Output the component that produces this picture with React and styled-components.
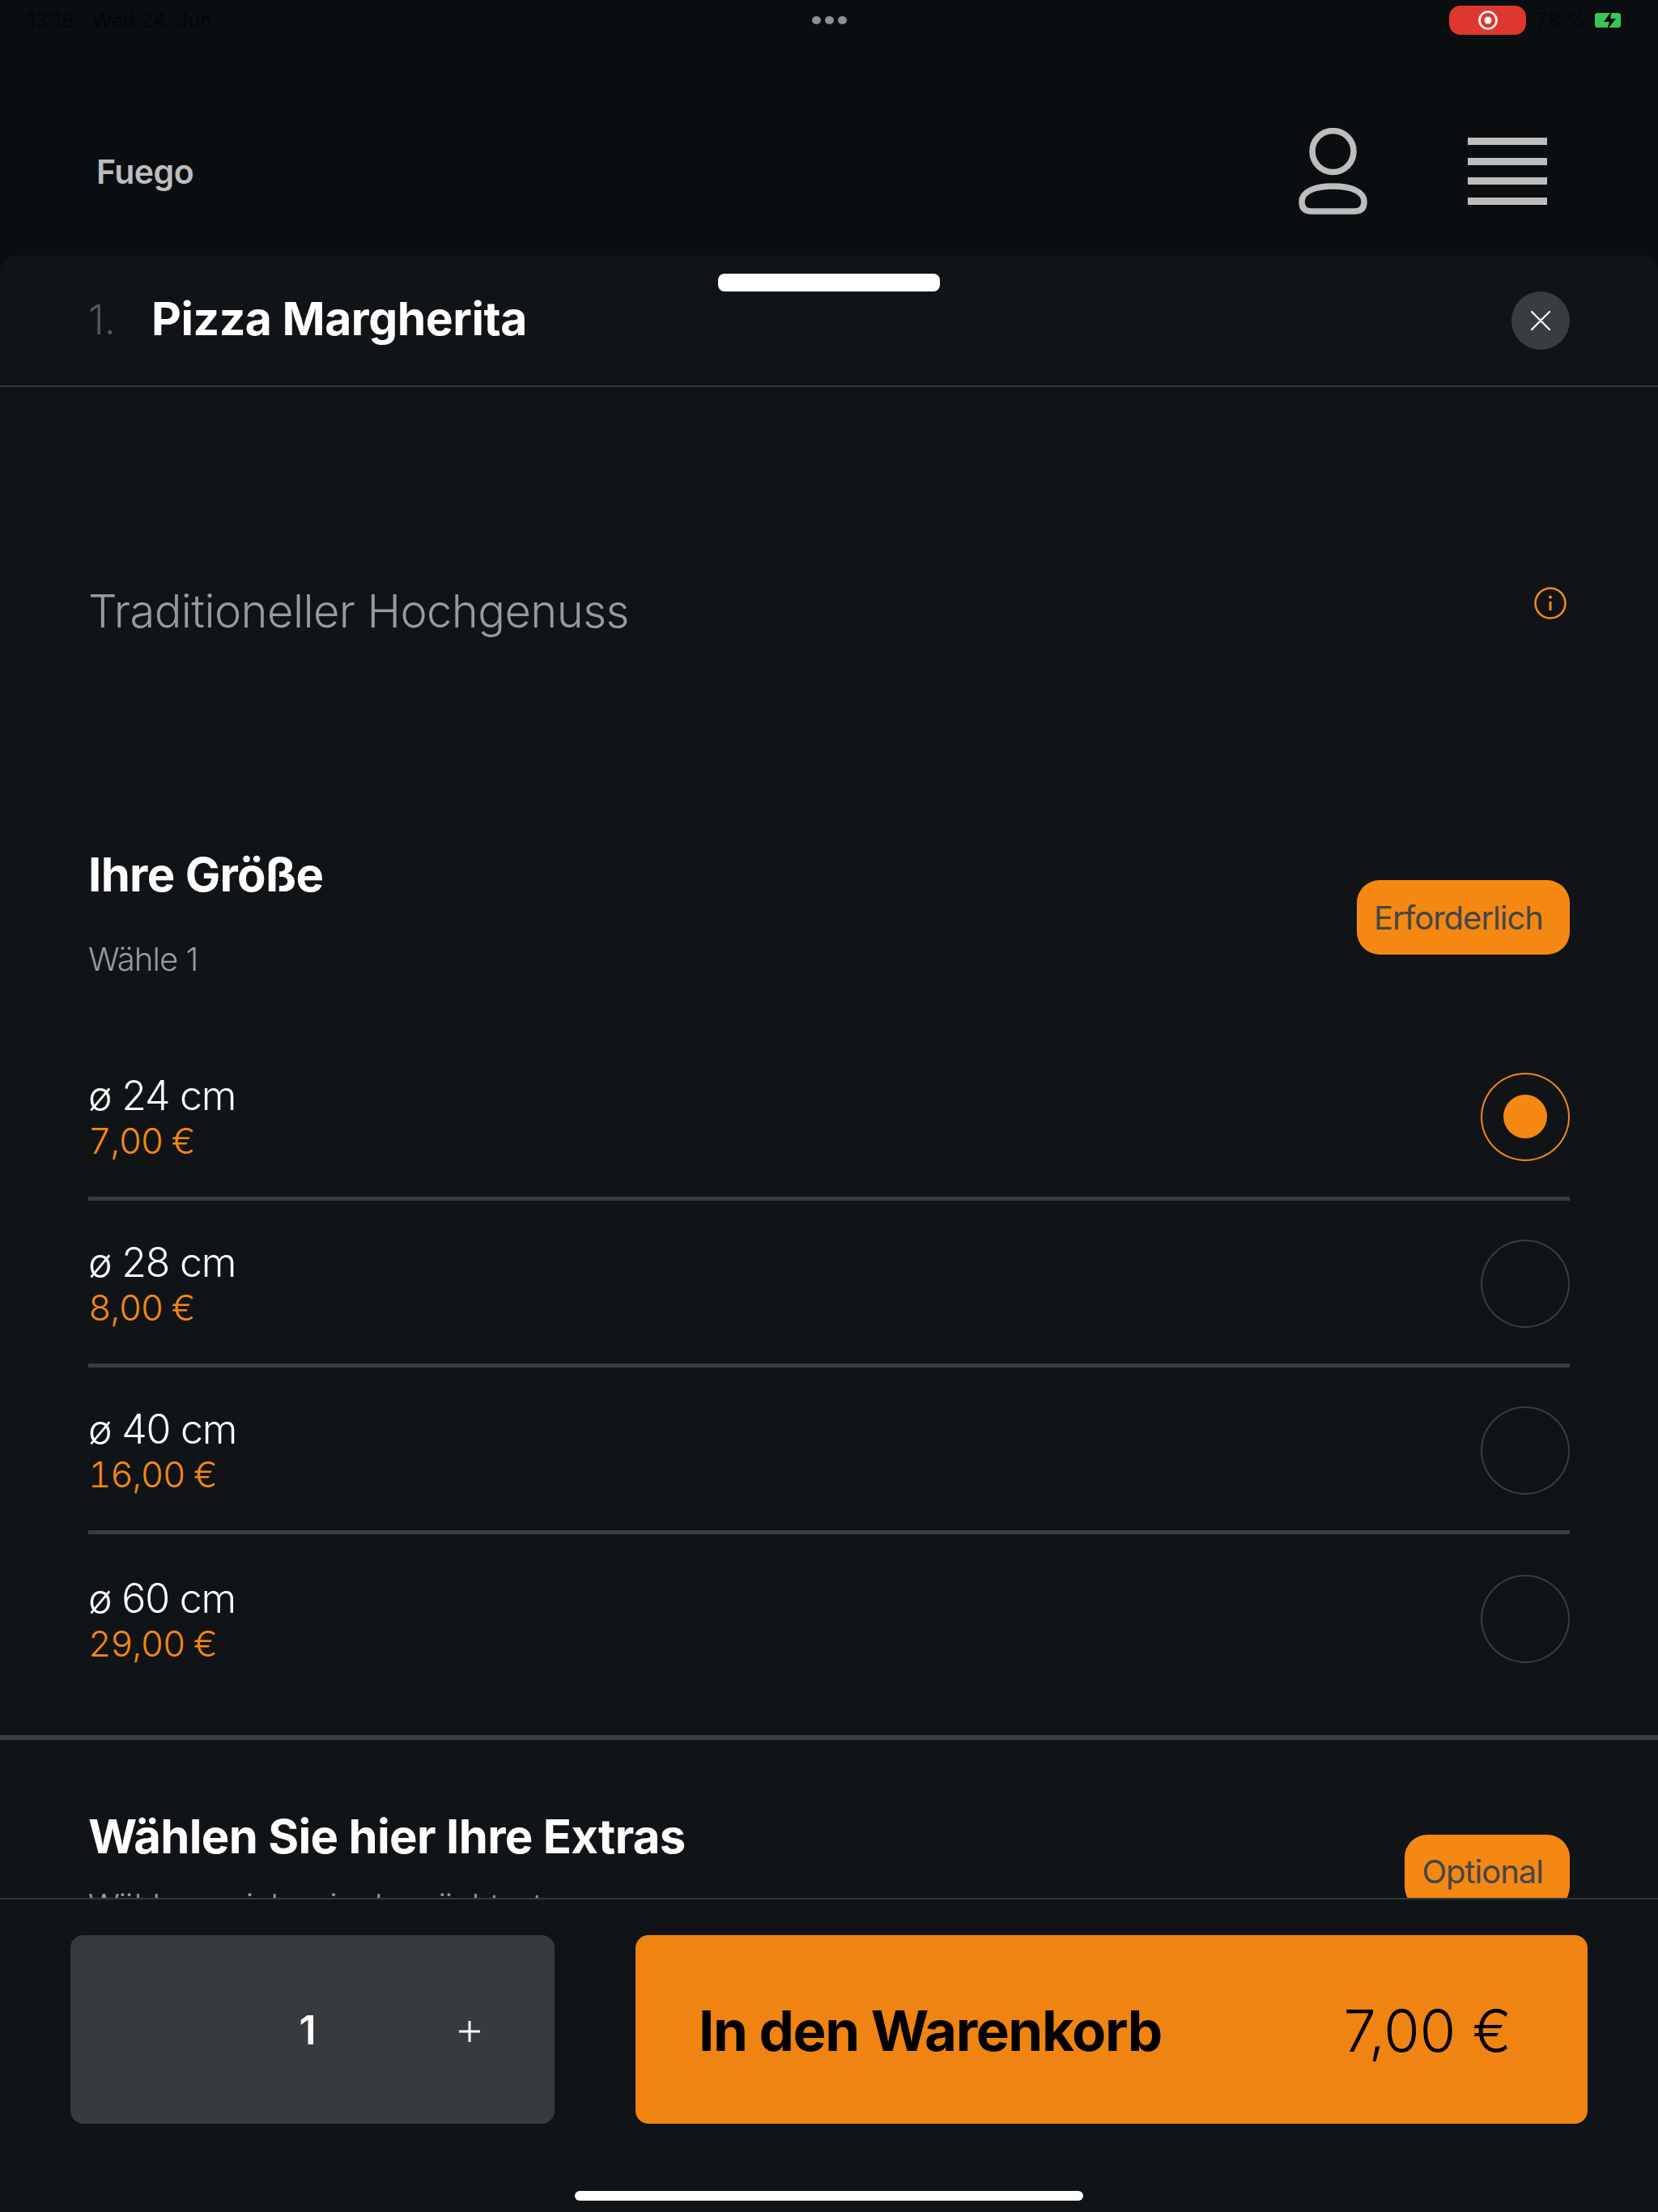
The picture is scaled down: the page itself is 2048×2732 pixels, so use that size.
import React from "react";
import styled, { createGlobalStyle } from "styled-components";

const Global = createGlobalStyle`
  html, body { margin: 0; padding: 0; background: #0b0e11; }
  * { box-sizing: border-box; }
  body { font-family: Inter, "Liberation Sans", sans-serif; }
`;
const orange = "#f48813";

const Page = styled.div`
  width: 2048px; height: 2732px; display: flex; flex-direction: column;
  overflow: hidden; background: #0b0e11;
`;
const Header = styled.header`height: 316px; display: flex; flex-direction: column; flex: none;`;
const StatusBar = styled.div`
  height: 46px; padding: 3px 33px 0 33px; display: grid; grid-template-columns: 1fr auto 1fr; align-items: center;
  font-size: 25px; color: #050607; font-weight: 400; flex: none;
`;
const StatusLeft = styled.div`display: flex; gap: 22px;`;
const Dots = styled.div`display: flex; gap: 5px;`;
const Dot = styled.span`width: 11px; height: 10px; border-radius: 50%; background: #8e9092;`;
const StatusRight = styled.div`display: flex; justify-content: flex-end; align-items: center; gap: 8px; margin-right: 2px;`;
const RecordPill = styled.div`
  width: 95px; height: 36px; border-radius: 14px; background: #de372e; margin-right: 5px;
  display: flex; align-items: center; justify-content: center;
`;
const Nav = styled.nav`
  flex: 1; padding: 61px 137px 0 119px; display: flex; align-items: center; gap: 124px;
`;
const Brand = styled.div`flex: 1; font-size: 41px; font-weight: 600; color: #bdbdbd; letter-spacing: -0.5px;`;
const Burger = styled.div`width: 98px; display: flex; flex-direction: column; gap: 15.5px;`;
const BurgerBar = styled.span`height: 9px; background: #bdbdbd;`;

const Sheet = styled.main`
  position: relative; flex: 1; min-height: 0; overflow: hidden; background: #101417;
  border-radius: 20px 20px 0 0;
`;
const Handle = styled.div`
  position: absolute; left: 887px; top: 22px; width: 274px; height: 22px; border-radius: 8px; background: #fff;
`;
const TitleBar = styled.div`
  height: 162px; border-bottom: 2px solid #36393c; padding: 0 109px 0 109px;
  display: flex; align-items: center;
`;
const ItemNo = styled.span`font-size: 50px; color: #55585b; font-weight: 300; width: 78px; margin-bottom: 3px;`;
const ItemTitle = styled.h1`flex: 1; margin: 0 0 6px; font-size: 57px; font-weight: 700; color: #fff; letter-spacing: -0.45px;`;
const CloseButton = styled.div`
  width: 72px; height: 72px; border-radius: 50%; background: #3a3d40;
  display: flex; align-items: center; justify-content: center;
`;
const DescRow = styled.div`
  padding: 243px 113px 0 109px; display: flex; justify-content: space-between; align-items: flex-start;
`;
const Desc = styled.p`margin: 0; font-size: 56px; line-height: 68px; font-weight: 300; color: #989b9d; letter-spacing: -0.56px;`;
const InfoIcon = styled.svg`margin-top: 4px; flex: none;`;
const SectionHead = styled.div`
  padding: 0 109px 0 109px; display: flex; justify-content: space-between; align-items: center;
  margin-top: ${p => p.$top}px;
`;
const HeadText = styled.div`display: flex; flex-direction: column;`;
const SectionTitle = styled.h2`margin: 0; font-size: 58px; line-height: 70px; font-weight: 700; color: #fff; letter-spacing: -0.65px;`;
const SectionSub = styled.div`
  margin-top: ${p => p.$gap}px; font-size: 40px; line-height: 48px; font-weight: 300; color: #989b9d; letter-spacing: -0.9px;
`;
const Chip = styled.div`
  margin-top: 12px; height: 92px; padding: 0 33px 0 21px; border-radius: 28px; background: ${orange};
  display: flex; align-items: center; font-size: 40px; color: #444648; font-weight: 400; letter-spacing: -1px;
`;
const Rows = styled.div`
  margin-top: 68px; padding: 0 109px 42px 109px; border-bottom: 6px solid #3a3d40;
`;
const Row = styled.div`
  height: 206px; padding-top: 3px; display: flex; justify-content: space-between; align-items: center;
  border-bottom: 5px solid #3a3d40;
  &:last-child { border-bottom: 0; }
`;
const RowText = styled.div`display: flex; flex-direction: column; padding-top: 4px;`;
const RowName = styled.div`font-size: 50px; line-height: 56px; font-weight: 300; color: #fff; letter-spacing: -1.2px;`;
const RowPrice = styled.div`
  font-size: 44px; line-height: 56px; font-weight: 300; color: ${orange}; font-variant-numeric: tabular-nums; letter-spacing: -1.3px;
`;
const Radio = styled.div`
  width: 110px; height: 109px; border-radius: 50%; display: flex; align-items: center; justify-content: center;
  border: 2px solid ${p => (p.$on ? orange : "#3a3d40")};
`;
const RadioDot = styled.span`width: 54px; height: 54px; border-radius: 50%; background: ${orange};`;

const Footer = styled.footer`
  flex: none; height: 388px; border-top: 2px solid #36393c; background: #101417;
  padding: 44px 87px 0; display: flex; flex-direction: column;
`;
const Actions = styled.div`display: flex; gap: 100px; height: 233px;`;
const Qty = styled.div`
  width: 598px; flex: none; border-radius: 16px; background: #383b3e; color: #fff;
  display: grid; grid-template-columns: repeat(3, 1fr); align-items: center; justify-items: center; padding-right: 10px;
`;
const QtyValue = styled.span`font-size: 50px; font-weight: 600; margin-right: 2px;`;
const Plus = styled.svg`margin: 5px 0 0 6px;`;
const Cart = styled.div`
  flex: 1; border-radius: 16px; background: #f08412; color: #000; padding: 2px 94px 0 78px;
  display: flex; align-items: center; justify-content: space-between;
`;
const CartLabel = styled.span`font-size: 69px; font-weight: 700; letter-spacing: -1.4px;`;
const CartPrice = styled.span`font-size: 72px; font-weight: 300;`;
const HomeBar = styled.div`
  margin: 83px auto 0; width: 628px; height: 12px; border-radius: 6px; background: #fff; flex: none;
`;

const UserIcon = () => (
  <svg width="85" height="107" viewBox="0 0 85 107" fill="none" stroke="#bdbdbd" strokeWidth="7.5">
    <circle cx="42.5" cy="29" r="25.5" />
    <path d="M16 103H69Q81 103 81 91C81 79 66 72 42.5 72C19 72 4 79 4 91Q4 103 16 103Z" />
  </svg>
);
const RecordIcon = () => (
  <svg width="24" height="24" viewBox="0 0 24 24" fill="none">
    <circle cx="12" cy="12" r="10.5" stroke="#fff" strokeWidth="2.6" />
    <circle cx="12" cy="12" r="4.5" fill="#fff" />
  </svg>
);
const BatteryIcon = () => (
  <svg width="46" height="24" viewBox="0 0 46 24" fill="none">
    <rect x="1" y="1" width="41" height="22" rx="6" stroke="#050607" strokeWidth="1.5" opacity=".7" />
    <rect x="3" y="3" width="32" height="18" rx="3" fill="#35c759" />
    <path d="M44 8v8" stroke="#050607" strokeWidth="2" />
    <path d="M24 0L14 14h7L18 24l11-14h-7z" fill="#050607" />
  </svg>
);
const CloseIcon = () => (
  <svg width="24" height="24" viewBox="0 0 24 24" stroke="#fff" strokeWidth="2.2" strokeLinecap="round">
    <path d="M1 1L23 23M23 1L1 23" />
  </svg>
);

const sizes = [
  ["ø 24 cm", "7,00 €", true],
  ["ø 28 cm", "8,00 €", false],
  ["ø 40 cm", "16,00 €", false],
  ["ø 60 cm", "29,00 €", false],
];

export default function App() {
  return (
    <Page>
      <Global />
      <Header>
        <StatusBar>
          <StatusLeft><span>13:18</span><span>Wed 24. Jun</span></StatusLeft>
          <Dots><Dot /><Dot /><Dot /></Dots>
          <StatusRight>
            <RecordPill><RecordIcon /></RecordPill>
            <span>78 %</span>
            <BatteryIcon />
          </StatusRight>
        </StatusBar>
        <Nav>
          <Brand>Fuego</Brand>
          <UserIcon />
          <Burger><BurgerBar /><BurgerBar /><BurgerBar /><BurgerBar /></Burger>
        </Nav>
      </Header>
      <Sheet>
        <Handle />
        <TitleBar>
          <ItemNo>1.</ItemNo>
          <ItemTitle>Pizza Margherita</ItemTitle>
          <CloseButton><CloseIcon /></CloseButton>
        </TitleBar>
        <DescRow>
          <Desc>Traditioneller Hochgenuss</Desc>
          <InfoIcon width="40" height="40" viewBox="0 0 40 40" fill="none">
            <circle cx="20" cy="20" r="18.5" stroke={orange} strokeWidth="2.6" />
            <path d="M20 18v11" stroke={orange} strokeWidth="3" />
            <circle cx="20" cy="12.5" r="2" fill={orange} />
          </InfoIcon>
        </DescRow>
        <SectionHead $top={256}>
          <HeadText>
            <SectionTitle>Ihre Größe</SectionTitle>
            <SectionSub $gap={46}>Wähle 1</SectionSub>
          </HeadText>
          <Chip>Erforderlich</Chip>
        </SectionHead>
        <Rows>
          {sizes.map(([name, price, on]) => (
            <Row key={name}>
              <RowText>
                <RowName>{name}</RowName>
                <RowPrice>{price}</RowPrice>
              </RowText>
              <Radio $on={on}>{on && <RadioDot />}</Radio>
            </Row>
          ))}
        </Rows>
        <SectionHead $top={84}>
          <HeadText>
            <SectionTitle>Wählen Sie hier Ihre Extras</SectionTitle>
            <SectionSub $gap={27}>Wähle so viele wie du möchtest</SectionSub>
          </HeadText>
          <Chip>Optional</Chip>
        </SectionHead>
      </Sheet>
      <Footer>
        <Actions>
          <Qty>
            <span />
            <QtyValue>1</QtyValue>
            <Plus width="26" height="26" viewBox="0 0 26 26" stroke="#fff" strokeWidth="3">
              <path d="M13 0V26M0 13H26" />
            </Plus>
          </Qty>
          <Cart>
            <CartLabel>In den Warenkorb</CartLabel>
            <CartPrice>7,00 €</CartPrice>
          </Cart>
        </Actions>
        <HomeBar />
      </Footer>
    </Page>
  );
}
